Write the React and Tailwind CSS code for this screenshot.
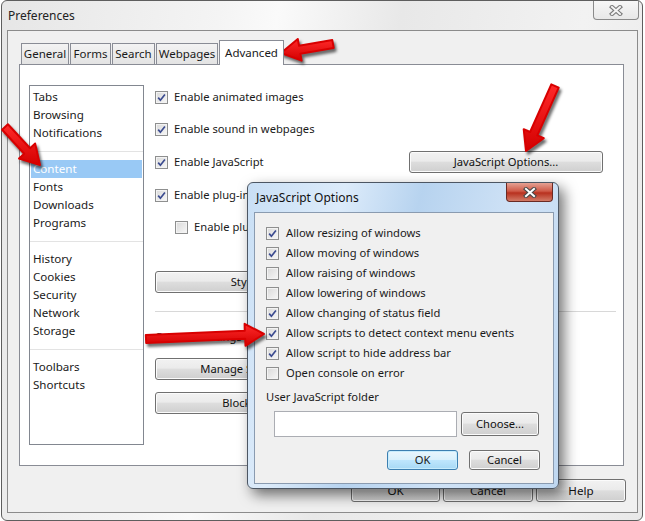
import React from 'react';

const BTN =
  'flex items-center justify-center rounded-[3px] border border-[#707070] bg-[linear-gradient(#f2f2f2,#ebebeb_45%,#dddddd_52%,#cfcfcf)] shadow-[inset_0_0_0_1px_#fbfbfb] text-[#111]';

const Check = ({ checked }) => (
  <div className="w-[13px] h-[13px] shrink-0 border border-[#8e8f8f] bg-[linear-gradient(135deg,#d9d9d9,#f7f7f7)] shadow-[inset_0_0_0_1px_#f3f3f3] flex items-center justify-center">
    {checked && (
      <svg width="11" height="11" viewBox="0 0 11 11">
        <path d="M2.2 5.6 L4.4 8.2 L8.9 2.4" fill="none" stroke="#3b4b8f" strokeWidth="1.7" />
      </svg>
    )}
  </div>
);

const XGlyph = ({ outline, fill, w = 14, h = 11 }) => (
  <svg width={w} height={h} viewBox="0 0 14 11">
    <path d="M3 2 L11 9 M11 2 L3 9" stroke={outline} strokeWidth="4.2" strokeLinecap="square" />
    <path d="M3 2 L11 9 M11 2 L3 9" stroke={fill} strokeWidth="2" strokeLinecap="square" />
  </svg>
);

const Arrow = ({ x1, y1, x2, y2, w = 4, hw = 11, hl = 19 }) => {
  const dx = x2 - x1;
  const dy = y2 - y1;
  const len = Math.hypot(dx, dy);
  const ux = dx / len;
  const uy = dy / len;
  const nx = -uy;
  const ny = ux;
  const bx = x2 - ux * hl;
  const by = y2 - uy * hl;
  const pts = [
    [x1 + nx * w, y1 + ny * w],
    [bx + nx * w, by + ny * w],
    [bx + nx * hw, by + ny * hw],
    [x2, y2],
    [bx - nx * hw, by - ny * hw],
    [bx - nx * w, by - ny * w],
    [x1 - nx * w, y1 - ny * w],
  ]
    .map((p) => p.map((v) => v.toFixed(1)).join(','))
    .join(' ');
  return (
    <g>
      <polygon points={pts} transform="translate(2,3)" fill="rgba(0,0,0,0.5)" stroke="rgba(0,0,0,0.5)" strokeWidth="2" strokeLinejoin="round" filter="url(#blur)" />
      <polygon points={pts} fill="url(#redg)" stroke="#d80000" strokeWidth="2" strokeLinejoin="round" />
    </g>
  );
};

const listItems = [
  'Tabs', 'Browsing', 'Notifications', '-',
  'Content', 'Fonts', 'Downloads', 'Programs', '-',
  'History', 'Cookies', 'Security', 'Network', 'Storage', '-',
  'Toolbars', 'Shortcuts',
];

const tabs = ['General', 'Forms', 'Search', 'Webpages'];
const tabWidths = ['w-[48px]', 'w-[41px]', 'w-[43px]', 'w-[62px]'];

const jsOptions = [
  ['Allow resizing of windows', true],
  ['Allow moving of windows', true],
  ['Allow raising of windows', false],
  ['Allow lowering of windows', false],
  ['Allow changing of status field', true],
  ['Allow scripts to detect context menu events', true],
  ['Allow script to hide address bar', true],
  ['Open console on error', false],
];

export default function App() {
  return (
    <div className="relative w-[645px] h-[521px] overflow-hidden bg-white font-['Noto_Sans',sans-serif] text-[11.2px] text-[#1a1a1a]">
      {/* Preferences window */}
      <div className="relative ml-[1px] w-[642px] h-[521px] rounded-[6px] border border-[#5e5e5e] bg-[linear-gradient(100deg,#e6e6e6_0%,#f4f4f4_30%,#fafafa_38%,#e8e8e8_55%,#f2f2f2_80%,#e9e9e9_100%)] flex flex-col">
        <div className="h-[29px] flex items-center pl-[6px] text-[12px] text-[#222]">Preferences</div>
        <div className="absolute top-0 right-[3px] w-[46px] h-[19px] rounded-b-[4px] border border-t-0 border-[#8a8a8a] bg-[linear-gradient(#f7f7f7,#e8e8e8)] flex items-center justify-center">
          <XGlyph outline="#7a7a7a" fill="#f4f4f4" />
        </div>

        <div className="ml-[5px] w-[631px] h-[483px] border border-[#8b8b8b] bg-[#f0f0f0] pl-[11px] pt-[9px] flex flex-col">
          {/* tabs */}
          <div className="flex items-end h-[24px] pl-[2px] gap-[1px]">
            {tabs.map((t, i) => (
              <div key={t} className={`${tabWidths[i]} h-[21px] border-t border-x border-[#898c95] bg-[linear-gradient(#f3f3f3,#e3e3e3)] flex items-center justify-center text-[11.5px]`}>
                {t}
              </div>
            ))}
            <div className="relative z-10 -mb-px w-[65px] h-[25px] border-t border-x border-[#898c95] bg-white flex items-center justify-center text-[11.5px] pb-[1px]">
              Advanced
            </div>
          </div>

          {/* panel */}
          <div className="w-[605px] h-[402px] border border-[#898c95] bg-white flex">
            <div className="ml-[9px] mt-[20px] w-[115px] h-[360px] border border-[#828790] bg-white pt-[2px]">
              {listItems.map((it, i) =>
                it === '-' ? (
                  <div key={i} className="h-[18px] flex items-center">
                    <div className="w-full h-px bg-[#e3e3e3]" />
                  </div>
                ) : (
                  <div
                    key={i}
                    className={`h-[18px] leading-[18px] pl-[2px] mx-[1px] text-[11.6px] ${it === 'Content' ? 'bg-[#99c9f5] text-white' : ''}`}
                  >
                    {it}
                  </div>
                )
              )}
            </div>

            <div className="ml-[11px] flex-1 pr-[7px] pt-[23px] flex flex-col">
              <div className="h-[18px] flex items-center gap-[6px]">
                <Check checked />
                <span>Enable animated images</span>
              </div>
              <div className="mt-[14px] h-[18px] flex items-center gap-[6px]">
                <Check checked />
                <span>Enable sound in webpages</span>
              </div>
              <div className="mt-[13px] h-[22px] flex items-center gap-[6px]">
                <Check checked />
                <span>Enable JavaScript</span>
                <div className={`${BTN} ml-auto mr-[13px] w-[194px] h-[22px]`}>JavaScript Options...</div>
              </div>
              <div className="mt-[13px] h-[18px] flex items-center gap-[6px]">
                <Check checked />
                <span>Enable plug-ins</span>
              </div>
              <div className="mt-[14px] h-[18px] flex items-center gap-[6px] pl-[20px]">
                <Check />
                <span>Enable plug-ins only on demand</span>
              </div>
              <div className={`${BTN} mt-[35px] w-[230px] h-[22px]`}>Style Options...</div>
              <div className="mt-[18px] h-px bg-[#d8d8d8]" />
              <div className="mt-[16px] h-[18px] leading-[18px]">Content settings</div>
              <div className={`${BTN} mt-[12px] w-[230px] h-[22px]`}>Manage Site Preferences...</div>
              <div className={`${BTN} mt-[12px] w-[230px] h-[22px]`}>Blocked Content...</div>
            </div>
          </div>

          {/* bottom buttons */}
          <div className="mt-[13px] pr-[11px] flex justify-end gap-[3px] text-[11.6px]">
            <div className={`${BTN} w-[89px] h-[23px]`}>OK</div>
            <div className={`${BTN} w-[90px] h-[23px]`}>Cancel</div>
            <div className={`${BTN} w-[90px] h-[23px]`}>Help</div>
          </div>
        </div>
      </div>

      {/* JavaScript Options dialog */}
      <div className="absolute left-[247px] top-[182px] w-[312px] h-[307px] rounded-[6px] border border-[#4c5663] bg-[linear-gradient(105deg,#c9dff5_0%,#dcebfa_25%,#b7d3ef_45%,#cfe2f6_70%,#bfd7f0_100%)] shadow-[5px_6px_14px_rgba(0,0,0,0.55)] flex flex-col">
        <div className="h-[29px] flex items-center pl-[8px] text-[12px] text-[#111]">JavaScript Options</div>
        <div className="absolute top-0 right-[5px] w-[47px] h-[19px] rounded-b-[4px] border border-t-0 border-[#6a2a24] bg-[linear-gradient(#e4a193,#cf5a48_45%,#b8311f_55%,#d27a66)] flex items-center justify-center">
          <XGlyph outline="#4a4a4a" fill="#ffffff" />
        </div>
        <div className="ml-[6px] w-[300px] h-[272px] border border-[#8a9bb0] bg-[#f0f0f0] pt-[10px] flex flex-col">
          {jsOptions.map(([label, on]) => (
            <div key={label} className="h-[20px] pl-[11px] flex items-center gap-[7px]">
              <Check checked={on} />
              <span>{label}</span>
            </div>
          ))}
          <div className="mt-[5px] h-[18px] leading-[18px] pl-[11px]">User JavaScript folder</div>
          <div className="mt-[5px] pl-[19px] flex items-center gap-[4px]">
            <div className="w-[183px] h-[26px] border border-[#abadb3] bg-white" />
            <div className={`${BTN} w-[78px] h-[24px]`}>Choose...</div>
          </div>
          <div className="mt-[13px] pr-[13px] flex justify-end gap-[11px]">
            <div className="w-[71px] h-[20px] rounded-[3px] border border-[#3c7fb1] bg-[linear-gradient(#eaf6fd,#d9f0fc_48%,#bee6fd_52%,#a7d9f5)] shadow-[inset_0_0_0_1px_#c7ecfd] flex items-center justify-center">OK</div>
            <div className={`${BTN} w-[71px] h-[20px]`}>Cancel</div>
          </div>
        </div>
      </div>

      {/* red arrows */}
      <svg className="absolute inset-0 pointer-events-none" width="645" height="521">
        <defs>
          <linearGradient id="redg" x1="0" y1="0" x2="0" y2="1">
            <stop offset="0" stopColor="#ff2a2a" />
            <stop offset="1" stopColor="#d30000" />
          </linearGradient>
          <filter id="blur" x="-20%" y="-20%" width="140%" height="140%">
            <feGaussianBlur stdDeviation="1.6" />
          </filter>
        </defs>
        <Arrow x1={333} y1={44} x2={281} y2={53} />
        <Arrow x1={5} y1={127} x2={40} y2={165} />
        <Arrow x1={555} y1={86} x2={526} y2={151} />
        <Arrow x1={146} y1={339} x2={264} y2={334} />
      </svg>
    </div>
  );
}
